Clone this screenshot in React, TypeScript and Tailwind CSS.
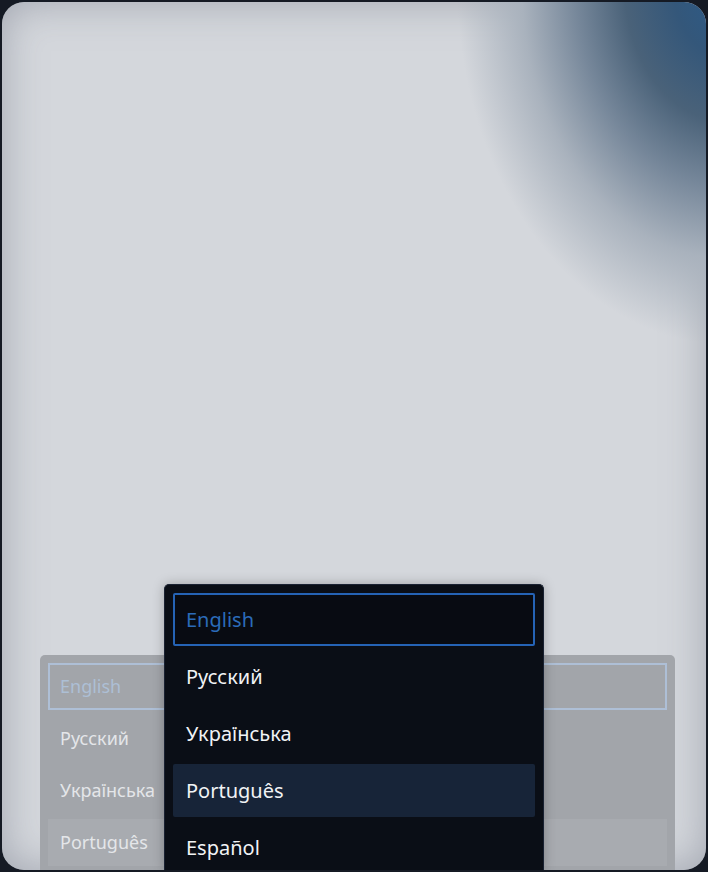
const LANGS = ["English", "Русский", "Українська", "Português", "Español"];

function BackMenu() {
  return (
    <div className="absolute left-[38px] top-[653px] w-[635px] h-[215px] overflow-hidden rounded-t-[5px] bg-[#a2a5aa] p-[8px] flex flex-col gap-[5px]">
      {LANGS.slice(0, 4).map((l, i) => (
        <div
          key={l}
          className={
            i === 0
              ? "h-[47px] shrink-0 flex items-center px-[10px] border-2 border-[#aebfd6] text-[18px] text-[#adbfd5]"
              : i === 3
                ? "h-[47px] shrink-0 flex items-center px-[12px] bg-[#a8abb0] text-[18px] text-[#e4e6e9]"
                : "h-[47px] shrink-0 flex items-center px-[12px] text-[18px] text-[#e4e6e9]"
          }
        >
          {l}
        </div>
      ))}
    </div>
  );
}

function FrontMenu() {
  return (
    <div className="absolute left-[162px] top-[582px] w-[380px] h-[286px] overflow-hidden rounded-t-[5px] bg-[#0a0e16] border border-b-0 border-[#1a2232] pt-[8px] px-[8px] flex flex-col gap-[4px] shadow-[0_0_12px_rgba(0,0,0,0.25)]">
      {LANGS.map((l, i) => (
        <div
          key={l}
          className={
            i === 0
              ? "h-[53px] shrink-0 flex items-center px-[11px] rounded-[2px] border-2 border-[#2563b5] bg-[#080b12] text-[20px] text-[#2b6bb9]"
              : i === 3
                ? "h-[53px] shrink-0 flex items-center px-[13px] rounded-[2px] bg-[#172438] text-[20px] text-[#f1f3f5]"
                : i === 4
                  ? "h-[46px] shrink-0 flex items-start pt-[13px] px-[13px] text-[20px] leading-[28px] text-[#f1f3f5]"
                  : "h-[53px] shrink-0 flex items-center px-[13px] text-[20px] text-[#f1f3f5]"
          }
        >
          {l}
        </div>
      ))}
    </div>
  );
}

export default function App() {
  return (
    <div
      className="w-[708px] h-[872px] bg-[#151a24] p-[2px]"
      style={{ fontFamily: '"Noto Sans", "Open Sans", sans-serif' }}
    >
      <div className="relative w-full h-full rounded-[22px] overflow-hidden bg-[#d4d7dc]">
        <div className="absolute inset-0 shadow-[inset_0_0_40px_rgba(120,126,140,0.55)] rounded-[22px]" />
        <div className="absolute inset-0 bg-[radial-gradient(ellipse_270px_360px_at_103%_-2%,#2a5b8a_0%,#34577a_20%,#4a6279_38%,#76879a_56%,#a9b2bd_76%,rgba(212,215,220,0)_100%)]" />
        <BackMenu />
        <FrontMenu />
      </div>
    </div>
  );
}
